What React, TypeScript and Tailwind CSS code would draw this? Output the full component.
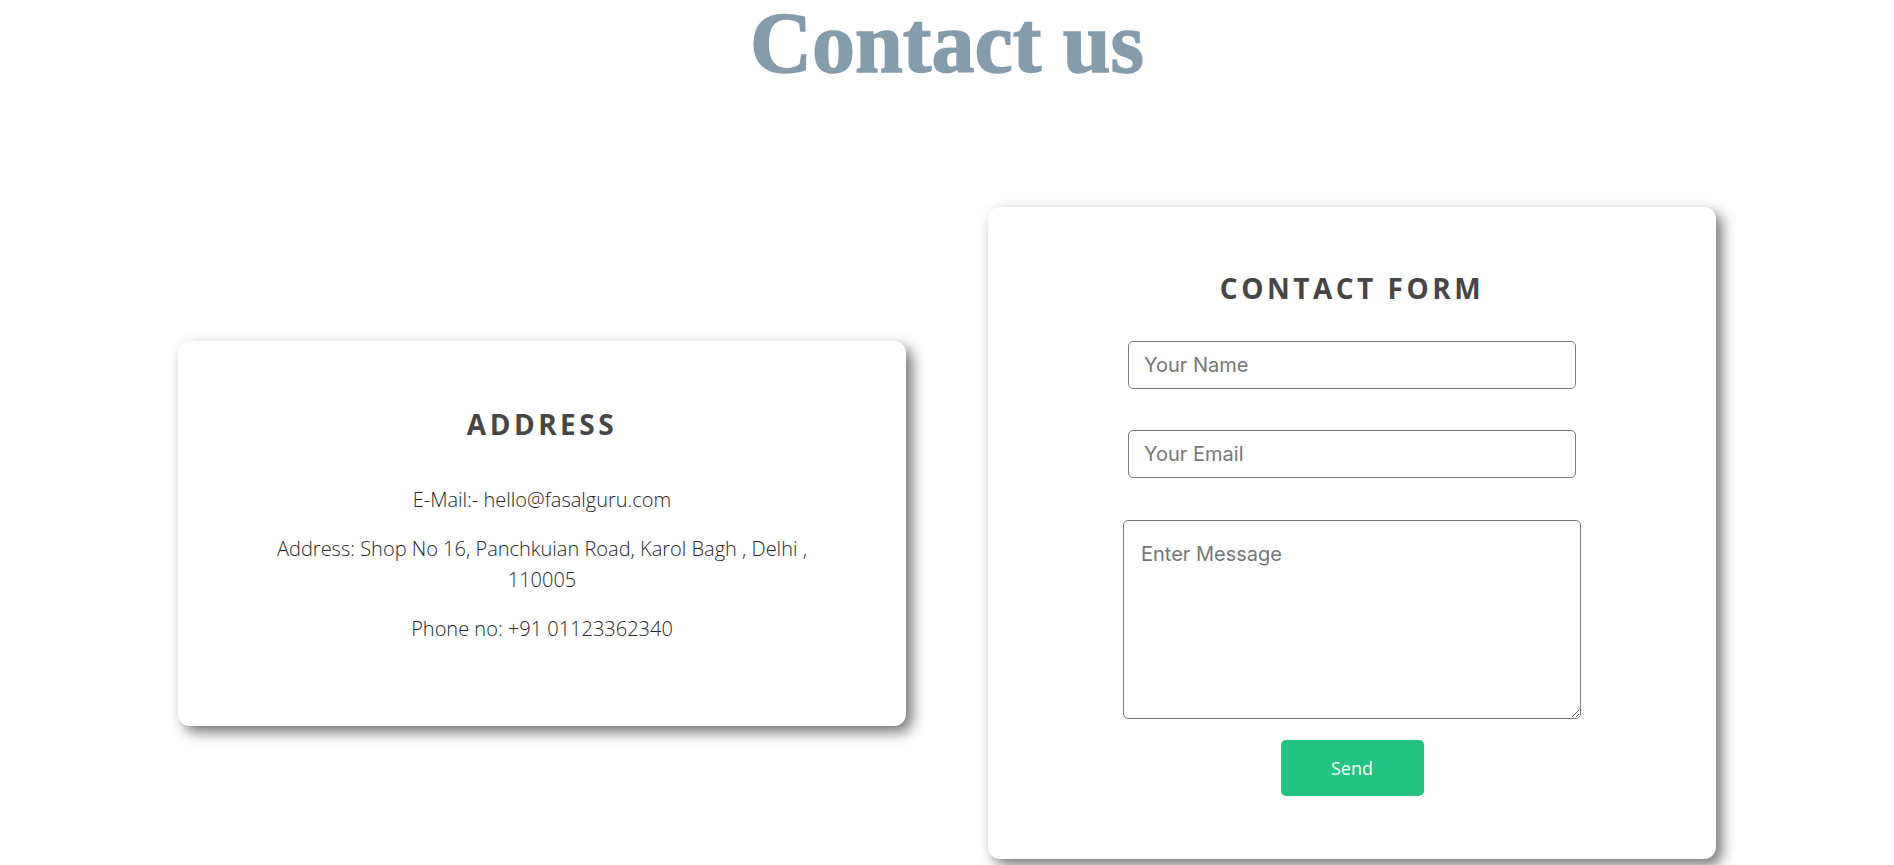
import React from "react";

const heading =
  "m-0 text-[28px] leading-[42px] font-bold tracking-[3.5px] text-[#464646] font-['Open_Sans','Noto_Sans',sans-serif]";
const field =
  "rounded-[5px] border border-[#7a7a7a] text-[20px] text-[#222] placeholder:text-[#767676] outline-none font-['Inter','Roboto',sans-serif]";

export default function App() {
  return (
    <div className="min-h-[865px] w-full bg-white overflow-hidden">
      <h1 className="text-center text-[86px] leading-[86px] font-bold text-[#849cab] [-webkit-text-stroke:1.5px_#849cab] font-['Liberation_Serif','DejaVu_Serif',serif]">
        Contact us
      </h1>

      <div className="mt-[121px] flex items-center justify-center gap-[82px]">
        {/* Address card */}
        <div className="w-[728px] rounded-[12px] bg-white px-[80px] pt-[62px] pb-[64px] text-center shadow-[6px_6px_14px_rgba(0,0,0,0.55)]">
          <h2 className={heading}>ADDRESS</h2>
          <div className="mt-[39px] text-[20px] leading-[31px] font-light text-[#262626] font-['Open_Sans','Noto_Sans',sans-serif]">
            <p className="mb-[18px]">E-Mail:- hello@fasalguru.com</p>
            <p className="mb-[18px]">
              Address: Shop No 16, Panchkuian Road, Karol Bagh , Delhi , 110005
            </p>
            <p className="mb-[18px]">Phone no: +91 01123362340</p>
          </div>
        </div>

        {/* Contact form card */}
        <div className="flex w-[728px] flex-col items-center rounded-[12px] bg-white pt-[60px] pb-[63px] shadow-[6px_6px_14px_rgba(0,0,0,0.55)]">
          <h2 className={heading}>CONTACT FORM</h2>
          <input
            type="text"
            placeholder="Your Name"
            className={`mt-[32px] h-[48px] w-[448px] px-[15px] ${field}`}
          />
          <input
            type="email"
            placeholder="Your Email"
            className={`mt-[41px] h-[48px] w-[448px] px-[15px] ${field}`}
          />
          <textarea
            placeholder="Enter Message"
            className={`mt-[42px] h-[199px] w-[458px] px-[17px] pt-[18px] ${field}`}
          />
          <button
            type="button"
            className="mt-[21px] h-[56px] w-[143px] rounded-[5px] bg-[#22c483] text-[18px] text-white font-['Open_Sans','Noto_Sans',sans-serif]"
          >
            Send
          </button>
        </div>
      </div>
    </div>
  );
}
